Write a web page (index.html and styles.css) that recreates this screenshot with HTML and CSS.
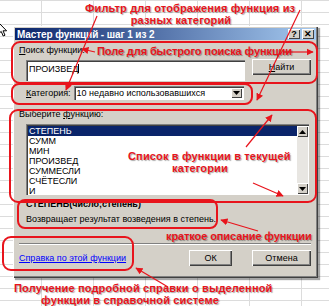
FILE: index.html
```html
<!DOCTYPE html>
<html lang="ru">
<head>
<meta charset="utf-8">
<link rel="stylesheet" href="styles.css">
</head>
<body>
<div class="sheet">
  <svg class="cursor" width="10" height="16" viewBox="0 0 10 16"><path d="M0.5 0.5 L0.5 12 L3.2 9.4 L5.2 14 L7 13.2 L5 8.8 L8.6 8.8 Z" fill="#fff" stroke="#000" stroke-width="1"/></svg>
  <div class="dialog">
    <div class="titlebar">
      <span class="title">Мастер функций - шаг 1 из 2</span>
      <div class="tb-btns">
        <span class="tb-btn">?</span>
        <span class="tb-btn x">✕</span>
      </div>
    </div>
    <div class="body">
      <div class="label"><u>П</u>оиск функции:</div>
      <div class="search-row">
        <div class="search-box">ПРОИЗВЕД<span class="caret"></span></div>
        <div class="btn find"><u>Н</u>айти</div>
      </div>
      <div class="cat-row">
        <span class="cat-label"><u>К</u>атегория:</span>
        <div class="combo">
          <span class="combo-text">10 недавно использовавшихся</span>
          <span class="dd"><svg width="7" height="4" viewBox="0 0 7 4"><path d="M0 0H7L3.5 4Z" fill="#000"/></svg></span>
        </div>
      </div>
      <div class="label sel-label">Выберите <u>ф</u>ункцию:</div>
      <div class="list">
        <div class="items">
          <div class="item selected">СТЕПЕНЬ</div>
          <div class="item">СУММ</div>
          <div class="item">МИН</div>
          <div class="item">ПРОИЗВЕД</div>
          <div class="item">СУММЕСЛИ</div>
          <div class="item">СЧЁТЕСЛИ</div>
          <div class="item">И</div>
        </div>
        <div class="scroll">
          <span class="sb-btn"><svg width="7" height="4" viewBox="0 0 7 4"><path d="M0 4H7L3.5 0Z" fill="#000"/></svg></span>
          <span class="sb-track"></span>
          <span class="sb-btn"><svg width="7" height="4" viewBox="0 0 7 4"><path d="M0 0H7L3.5 4Z" fill="#000"/></svg></span>
        </div>
      </div>
      <div class="sig">СТЕПЕНЬ(число;степень)</div>
      <div class="desc">Возвращает результат возведения в степень.</div>
      <div class="sep"></div>
      <div class="footer">
        <span class="help">Справка по этой функции</span>
        <div class="btn ok">ОК</div>
        <div class="btn cancel">Отмена</div>
      </div>
    </div>
  </div>

  <svg class="overlay" width="329" height="306" viewBox="0 0 329 306">
    <defs>
      <marker id="ah" viewBox="0 0 10 10" refX="9" refY="5" markerWidth="6" markerHeight="6" orient="auto">
        <path d="M0 0L10 5L0 10Z" fill="#e8141c"/>
      </marker>
    </defs>
    <g fill="none" stroke="#e8141c" stroke-width="2">
      <rect x="12" y="42" width="305" height="41" rx="8"/>
      <rect x="12" y="84" width="240" height="20" rx="7"/>
      <rect x="10" y="110" width="306" height="92" rx="8"/>
      <rect x="18" y="200" width="199" height="28" rx="7"/>
      <rect x="3" y="237" width="130" height="33" rx="8"/>
    </g>
    <g fill="none" stroke="#e8141c" stroke-width="1.2" marker-end="url(#ah)">
      <line x1="97" y1="16" x2="66" y2="90"/>
      <line x1="300" y1="10" x2="257" y2="100"/>
      <line x1="283" y1="52" x2="313" y2="52"/>
      <line x1="95" y1="52" x2="82" y2="49"/>
      <line x1="246" y1="147" x2="272" y2="115"/>
      <line x1="253" y1="183" x2="283" y2="196"/>
      <line x1="258" y1="231" x2="221" y2="220"/>
      <line x1="168" y1="287" x2="136" y2="268"/>
    </g>
  </svg>

  <div class="note n-filter">Фильтр для отображения функция из<br>разных категорий</div>
  <div class="note n-search">Поле для быстрого поиска функции</div>
  <div class="note n-list">Список в функции в текущей<br>категории</div>
  <div class="note n-desc">краткое описание функции</div>
  <div class="note n-help">Получение подробной справки о выделенной<br>функции в справочной системе</div>
</div>
</body>
</html>
```

FILE: styles.css
```css
* { box-sizing: border-box; }
html, body { margin: 0; padding: 0; }
body { width: 329px; height: 306px; overflow: hidden; background: #fff; }

.sheet {
  position: relative;
  width: 329px;
  height: 306px;
  overflow: hidden;
  padding-top: 26px;
  padding-left: 13px;
  background-color: #fff;
  background-image:
    linear-gradient(to right, #dcdcdc 1px, transparent 1px),
    linear-gradient(to bottom, #dcdcdc 1px, transparent 1px);
  background-size: 52px 100%, 100% 12px;
  background-position: 41px 0, 0 0;
  font-family: "Liberation Sans", Arial, sans-serif;
}

.cursor { position: absolute; left: -2px; top: 22px; }

.dialog {
  width: 305px;
  height: 252px;
  background: #d4d0c8;
  padding: 2px;
  box-shadow: inset 1px 1px 0 #fff, inset -1px -1px 0 #404040, inset -2px -2px 0 #808080, 2px 2px 1px rgba(0,0,0,0.35);
  display: flex;
  flex-direction: column;
}

.titlebar {
  height: 12px;
  background: linear-gradient(to right, #0a246a, #a6caf0);
  display: flex;
  align-items: center;
  justify-content: space-between;
  padding: 0 2px 0 2px;
}
.title {
  color: #fff;
  font-weight: bold;
  font-size: 10px;
  letter-spacing: -0.1px;
}
.tb-btns { display: flex; gap: 2px; }
.tb-btn {
  width: 12px;
  height: 10px;
  background: #d4d0c8;
  box-shadow: inset 1px 1px 0 #fff, inset -1px -1px 0 #404040;
  font-size: 9px;
  font-weight: bold;
  line-height: 10px;
  text-align: center;
  color: #000;
}

.body {
  flex: 1;
  display: flex;
  flex-direction: column;
  padding: 5px 5px 0 4px;
  font-size: 9px;
  color: #000;
}
.label { line-height: 11px; }
.search-row {
  display: flex;
  align-items: flex-start;
  margin-top: 4px;
  padding-left: 7px;
  gap: 7px;
}
.search-box {
  width: 219px;
  height: 21px;
  background: #fff;
  box-shadow: inset 1px 1px 0 #808080, inset 2px 2px 0 #404040, inset -1px -1px 0 #fff;
  padding: 4px 3px;
  line-height: 10px;
}
.caret { display: inline-block; width: 1px; height: 9px; background: #000; vertical-align: -1px; }

.btn {
  height: 16px;
  background: #d4d0c8;
  box-shadow: inset 1px 1px 0 #fff, inset -1px -1px 0 #404040, inset -2px -2px 0 #808080;
  display: flex;
  align-items: center;
  justify-content: center;
  color: #000;
}
.find { width: 59px; margin-top: -1px; }

.cat-row {
  display: flex;
  align-items: center;
  margin-top: 5px;
  padding-left: 7px;
  gap: 3px;
}
.combo {
  width: 170px;
  height: 14px;
  background: #fff;
  box-shadow: inset 1px 1px 0 #808080, inset 2px 2px 0 #404040, inset -1px -1px 0 #fff;
  display: flex;
  align-items: center;
  justify-content: space-between;
  padding: 2px 2px 2px 3px;
}
.dd {
  width: 11px;
  height: 10px;
  background: #d4d0c8;
  box-shadow: inset 1px 1px 0 #fff, inset -1px -1px 0 #404040;
  display: flex;
  align-items: center;
  justify-content: center;
}

.sel-label { margin-top: 9px; }

.list {
  margin: 4px 0 0 7px;
  width: 283px;
  height: 71px;
  background: #fff;
  box-shadow: inset 1px 1px 0 #808080, inset 2px 2px 0 #404040, inset -1px -1px 0 #fff;
  display: flex;
  padding: 2px 1px 1px 2px;
}
.items { flex: 1; }
.item { height: 10px; line-height: 10px; padding-left: 1px; }
.item.selected { background: #0a246a; color: #fff; }
.scroll {
  width: 11px;
  display: flex;
  flex-direction: column;
  background: #e8e6e2;
}
.sb-btn {
  height: 11px;
  background: #d4d0c8;
  box-shadow: inset 1px 1px 0 #fff, inset -1px -1px 0 #404040;
  display: flex;
  align-items: center;
  justify-content: center;
}
.sb-track { flex: 1; }

.sig { margin: 4px 0 0 7px; font-weight: bold; line-height: 11px; }
.desc { margin: 4px 0 0 7px; line-height: 11px; }
.sep {
  margin: 18px 0 0 0;
  height: 2px;
  border-top: 1px solid #808080;
  border-bottom: 1px solid #fff;
}
.footer {
  display: flex;
  align-items: center;
  margin-top: 5px;
}
.help { color: #0000ff; text-decoration: underline; flex: 1; }
.ok { width: 43px; }
.cancel { width: 59px; margin-left: 20px; }

.overlay { position: absolute; left: 0; top: 0; }

.note {
  position: absolute;
  color: #e8141c;
  font-weight: bold;
  font-size: 11px;
  line-height: 12px;
  letter-spacing: 0.15px;
  text-shadow: 1px 1px 1px rgba(0,0,0,0.35);
  white-space: nowrap;
  text-align: center;
}
.n-filter { left: 85px; top: 2px; width: 192px; }
.n-search { left: 97px; top: 45px; letter-spacing: -0.1px; }
.n-list { left: 128px; top: 150px; width: 144px; }
.n-desc { left: 166px; top: 230px; letter-spacing: -0.1px; }
.n-help { left: 14px; top: 282px; width: 232px; }
```
